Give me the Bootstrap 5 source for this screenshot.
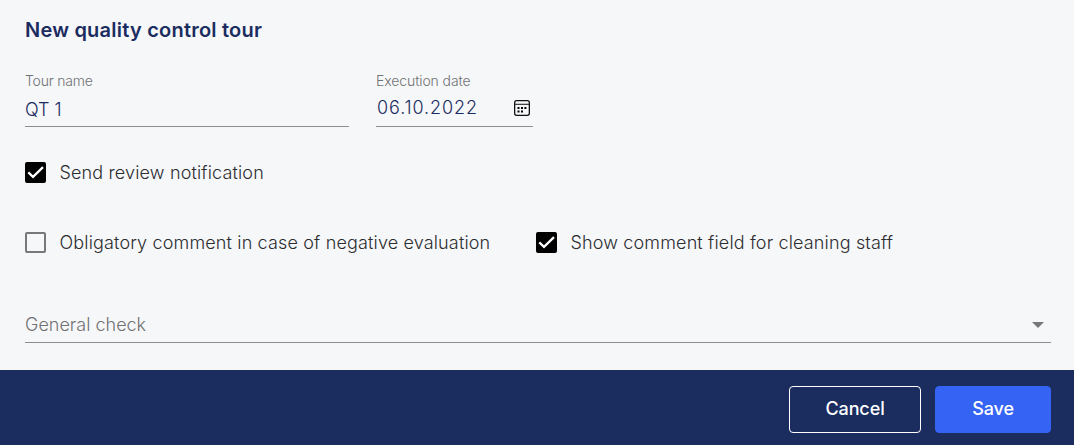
<!DOCTYPE html>
<html lang="en">
<head>
    <meta charset="UTF-8">
    <meta name="viewport" content="width=device-width, initial-scale=1.0">
    <title>New quality control tour</title>
    <link href="https://cdn.jsdelivr.net/npm/bootstrap@5.3.0/dist/css/bootstrap.min.css" rel="stylesheet">
    <style>
        body {
            font-family: Inter, sans-serif;
            background-color: #f6f7f9;
            color: #2c2d30;
        }
        .tour-form {
            height: 370px;
            padding: 16px 23px 0 25px;
        }
        .tour-title {
            font-size: 20px;
            line-height: 28px;
            font-weight: 600;
            letter-spacing: .22px;
            color: #1b2c5f;
            margin-bottom: 28px;
        }
        .field-name { width: 324px; margin-right: 27px; }
        .field-date { width: 157px; }
        .field-label {
            font-size: 14px;
            line-height: 18px;
            font-weight: 300;
            letter-spacing: -.1px;
            color: #707173;
        }
        .field-name .field-label { letter-spacing: -.2px; }
        .field-line {
            border-bottom: 1px solid #8c8d8f;
        }
        .field-line input {
            height: 36px;
            padding: 0;
            font-size: 18px;
            line-height: 36px;
            font-weight: 300;
            color: #1b2c5f;
        }
        .field-name input { padding-top: 2px; line-height: 34px; }
        .field-line .date-value {
            padding-left: 1px;
            letter-spacing: .9px;
        }
        .calendar-icon { margin-right: 3px; }
        .check-row { height: 21px; margin-top: 35px; }
        .check-row + .check-row { margin-top: 49px; }
        .check-wide { width: 511px; }
        .check-item .form-check-input {
            width: 21px;
            height: 21px;
            margin: 0 13.5px 0 0;
            border: 2px solid #77787a;
            border-radius: 2px;
            background-color: transparent;
        }
        .check-item .form-check-input:checked {
            background-color: #000;
            border-color: #000;
            background-size: 21px 21px;
            background-position: center;
            background-origin: border-box;
            background-image: url("data:image/svg+xml,%3csvg xmlns='http://www.w3.org/2000/svg' viewBox='0 0 21 21'%3e%3cpath fill='none' stroke='%23fff' stroke-width='2.2' d='M3.3 10.4l4.7 4.5L18 5.1'/%3e%3c/svg%3e");
        }
        .check-item label {
            font-size: 18px;
            line-height: 21px;
            font-weight: 300;
            letter-spacing: .15px;
        }
        .select-field {
            height: 35px;
            margin-top: 55px;
            padding-right: 7px;
            font-size: 18px;
            font-weight: 300;
            color: #707173;
        }
        .select-field span { padding-bottom: 2px; }
        .action-bar {
            height: 75px;
            padding: 16px 23px 0;
            gap: 14px;
            background-color: #1b2c5f;
        }
        .action-bar .btn {
            height: 47px;
            padding: 0 0 2px;
            font-size: 18px;
            font-weight: 500;
            letter-spacing: -.1px;
            border-radius: 4px;
        }
        .btn-cancel {
            width: 132px;
            --bs-btn-color: #fff;
            --bs-btn-border-color: #fff;
        }
        .btn-save {
            width: 116px;
            --bs-btn-bg: #3564f4;
            --bs-btn-border-color: #3564f4;
        }
    </style>
</head>
<body>
    <form>
        <div class="tour-form">
            <h1 class="tour-title">New quality control tour</h1>

            <div class="d-flex">
                <div class="field-name">
                    <label for="tourName" class="field-label d-block">Tour name</label>
                    <div class="field-line">
                        <input type="text" id="tourName" class="form-control border-0 rounded-0 bg-transparent shadow-none" value="QT 1">
                    </div>
                </div>
                <div class="field-date">
                    <label for="executionDate" class="field-label d-block">Execution date</label>
                    <div class="field-line d-flex align-items-center">
                        <input type="text" id="executionDate" class="date-value form-control border-0 rounded-0 bg-transparent shadow-none" value="06.10.2022">
                        <svg class="calendar-icon flex-shrink-0" width="16" height="16" viewBox="0 0 16 16">
                            <rect x=".65" y=".65" width="14.7" height="14.7" rx="2" fill="none" stroke="#111" stroke-width="1.3"/>
                            <path d="M1 4.3h14" stroke="#222" stroke-width="1.1"/>
                            <path d="M3.5 7h2v2h-2zM7 7h2v2H7zM10.4 7h2v2h-2zM3.5 10.4h2v2h-2zM7 10.4h2v2H7z" fill="#000"/>
                        </svg>
                    </div>
                </div>
            </div>

            <div class="check-row d-flex">
                <div class="check-item d-flex">
                    <input class="form-check-input" type="checkbox" id="sendReview" checked>
                    <label for="sendReview">Send review notification</label>
                </div>
            </div>
            <div class="check-row d-flex">
                <div class="check-item check-wide d-flex">
                    <input class="form-check-input" type="checkbox" id="obligatory">
                    <label for="obligatory">Obligatory comment in case of negative evaluation</label>
                </div>
                <div class="check-item d-flex">
                    <input class="form-check-input" type="checkbox" id="showComment" checked>
                    <label for="showComment">Show comment field for cleaning staff</label>
                </div>
            </div>

            <div class="select-field field-line d-flex align-items-center justify-content-between" role="button">
                <span>General check</span>
                <svg width="12" height="6" viewBox="0 0 12 6"><path d="M0 0h12L6 6z" fill="#77787a"/></svg>
            </div>
        </div>

        <div class="action-bar d-flex justify-content-end">
            <button type="button" class="btn btn-outline-light btn-cancel">Cancel</button>
            <button type="submit" class="btn btn-primary btn-save">Save</button>
        </div>
    </form>

    <script src="https://cdn.jsdelivr.net/npm/bootstrap@5.3.0/dist/js/bootstrap.bundle.min.js"></script>
</body>
</html>
